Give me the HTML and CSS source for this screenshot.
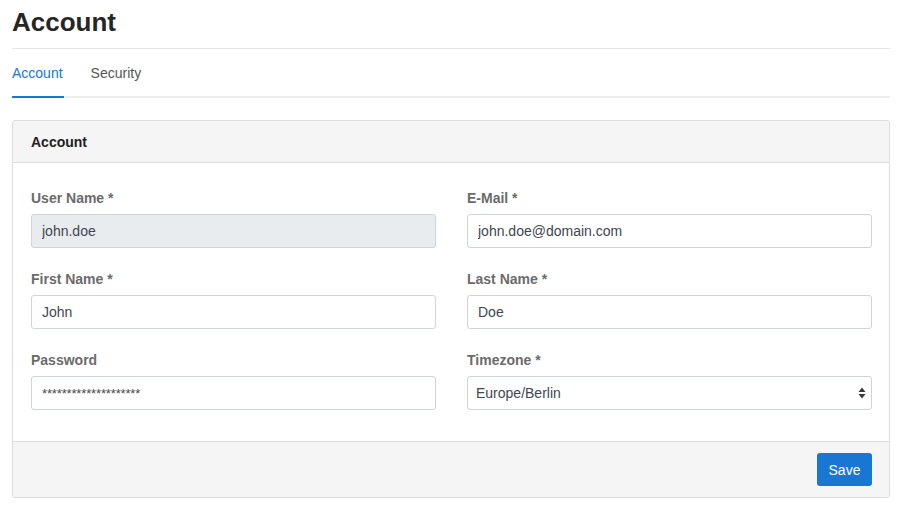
FILE: index.html
```html
<!DOCTYPE html>
<html>
<head>
<meta charset="utf-8">
<link rel="stylesheet" href="styles.css">
</head>
<body>
<div class="page">
  <h1 class="title">Account</h1>
  <nav class="tabs">
    <a class="tab active">Account</a>
    <a class="tab">Security</a>
  </nav>
  <section class="card">
    <div class="card-header">Account</div>
    <div class="card-body">
      <div class="field">
        <label class="label">User Name *</label>
        <input class="input" type="text" value="john.doe" disabled>
      </div>
      <div class="field">
        <label class="label">E-Mail *</label>
        <input class="input" type="text" value="john.doe@domain.com">
      </div>
      <div class="field">
        <label class="label">First Name *</label>
        <input class="input" type="text" value="John">
      </div>
      <div class="field">
        <label class="label">Last Name *</label>
        <input class="input" type="text" value="Doe">
      </div>
      <div class="field">
        <label class="label">Password</label>
        <input class="input pw" type="text" placeholder="********************">
      </div>
      <div class="field">
        <label class="label">Timezone *</label>
        <div class="select-wrap">
          <select class="input select">
            <option>Europe/Berlin</option>
          </select>
          <svg class="select-arrows" width="8" height="12" viewBox="0 0 8 12"><path d="M4 0.5 L7.5 5 L0.5 5 Z M4 11.5 L7.5 7 L0.5 7 Z" fill="#3a3a3a"/></svg>
        </div>
      </div>
    </div>
    <div class="card-footer">
      <button class="btn">Save</button>
    </div>
  </section>
</div>
</body>
</html>
```

FILE: styles.css
```css
* { box-sizing: border-box; }
html, body { margin: 0; padding: 0; background: #fff; }
body {
  font-family: "Liberation Sans", Arial, Helvetica, sans-serif;
  font-size: 14px;
  color: #333;
}
.page { padding: 0 11px 0 12px; }
.title {
  margin: 0;
  padding-top: 7px;
  padding-bottom: 10px;
  font-size: 26px;
  line-height: 31px;
  font-weight: 700;
  color: #262626;
  border-bottom: 1px solid #e5e5e5;
}
.tabs {
  display: flex;
  gap: 27px;
  border-bottom: 2px solid #eeeeee;
}
.tab {
  display: block;
  padding: 14px 0 13px;
  line-height: 20px;
  font-size: 14px;
  color: #555;
  margin-bottom: -2px;
  border-bottom: 2px solid transparent;
}
.tab.active {
  color: #1976d2;
  border-bottom-color: #1976d2;
  padding-right: 1px;
}
.card {
  margin-top: 22px;
  border: 1px solid #dddddd;
  border-radius: 3px;
  overflow: hidden;
}
.card-header {
  background: #f5f5f5;
  padding: 11px 18px 10px;
  line-height: 20px;
  font-weight: 700;
  color: #222;
  border-bottom: 1px solid #dddddd;
}
.card-body {
  display: grid;
  grid-template-columns: 1fr 1fr;
  column-gap: 31px;
  row-gap: 21px;
  padding: 25px 17px 31px 18px;
}
.field { display: flex; flex-direction: column; }
.label {
  font-weight: 700;
  color: #6b6b6b;
  line-height: 20px;
  margin-bottom: 6px;
}
.input {
  height: 34px;
  width: 100%;
  border: 1px solid #ced4da;
  border-radius: 3px;
  padding: 0 10px;
  font-family: "Liberation Sans", Arial, Helvetica, sans-serif;
  font-size: 14px;
  color: #3f4650;
  background: #fff;
  outline: none;
}
.input:disabled { background: #e9ecef; color: #3f4650; }
.pw::placeholder { color: #4a4a4a; font-size: 13px; letter-spacing: -0.15px; }
.select-wrap { position: relative; }
.select {
  -webkit-appearance: none;
  appearance: none;
  padding: 0 24px 0 8px;
}
.select-arrows {
  position: absolute;
  right: 6px;
  top: 11px;
  pointer-events: none;
}
.card-footer {
  background: #f5f5f5;
  border-top: 1px solid #dddddd;
  display: flex;
  justify-content: flex-end;
  padding: 11px 17px 11px;
}
.btn {
  height: 33px;
  width: 55px;
  border: none;
  border-radius: 3px;
  background: #1976d2;
  color: #fff;
  font-family: "Liberation Sans", Arial, Helvetica, sans-serif;
  font-size: 14px;
  padding: 0;
}
```
